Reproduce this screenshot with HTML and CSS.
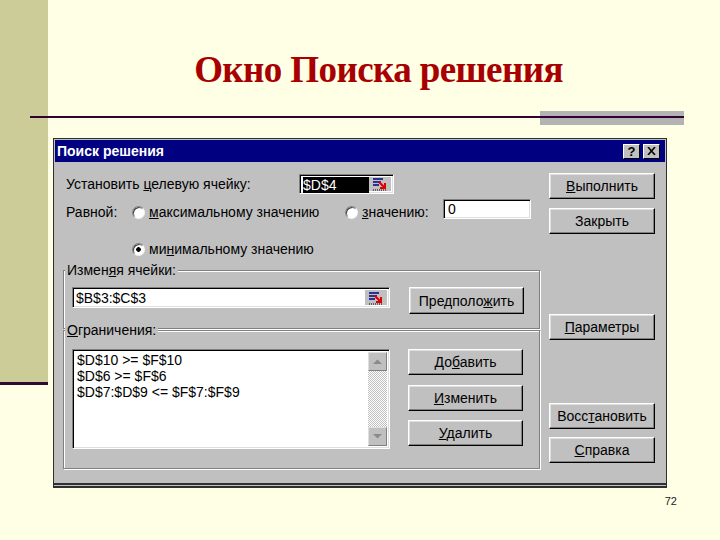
FILE: index.html
```html
<!DOCTYPE html>
<html lang="ru">
<head>
  <meta charset="UTF-8">
  <title>Окно Поиска решения</title>
  <link rel="stylesheet" href="styles.css">
</head>
<body>
  <div class="slide">
    <div class="sidebar"></div>
    <div class="main">
      <h1 class="title">Окно Поиска решения</h1>
      <div class="rule"><div class="rule-line"></div><div class="rule-block"></div></div>

      <div class="dialog">
        <div class="caption">
          <span class="caption-text">Поиск решения</span>
          <span class="caption-btn">?</span>
          <span class="caption-btn close">
            <svg width="9" height="8" viewBox="0 0 9 8"><path d="M1 0l7 8M8 0l-7 8" stroke="#000" stroke-width="1.6"/></svg>
          </span>
        </div>

        <div class="dialog-body">
          <div class="left">
            <div class="row row-target">
              <span class="label-target">Установить <u>ц</u>елевую ячейку:</span>
              <div class="field refedit narrow">
                <span class="ref-text"><span class="sel">$D$4</span></span>
                <span class="ref-btn">
                  <svg width="16" height="14" viewBox="0 0 16 14">
                    <path d="M1 2h10M1 5h8M1 8h6" stroke="#000080" stroke-width="1.5"/>
                    <path d="M7 5l5 5M13 6v5h-5" stroke="#e00000" stroke-width="2" fill="none"/>
                    <path d="M1 13h14" stroke="#000" stroke-dasharray="1 1"/>
                  </svg>
                </span>
              </div>
            </div>

            <div class="row row-equal">
              <span class="label-equal">Равной:</span>
              <label class="opt opt-max"><span class="radio"></span><span><u>м</u>аксимальному значению</span></label>
              <label class="opt opt-val"><span class="radio"></span><span><u>з</u>начению:</span></label>
              <div class="field value-field">0</div>
            </div>

            <div class="row row-min">
              <span class="label-equal"></span>
              <label class="opt"><span class="radio checked"></span><span>ми<u>н</u>имальному значению</span></label>
            </div>

            <fieldset class="group group-cells">
              <legend>Измен<u>я</u>я ячейки:</legend>
              <div class="group-row">
                <div class="field refedit wide">
                  <span class="ref-text">$B$3:$C$3</span>
                  <span class="ref-btn">
                    <svg width="16" height="14" viewBox="0 0 16 14">
                      <path d="M1 2h10M1 5h8M1 8h6" stroke="#000080" stroke-width="1.5"/>
                      <path d="M7 5l5 5M13 6v5h-5" stroke="#e00000" stroke-width="2" fill="none"/>
                      <path d="M1 13h14" stroke="#000" stroke-dasharray="1 1"/>
                    </svg>
                  </span>
                </div>
                <button class="btn btn-guess">Предполо<u>ж</u>ить</button>
              </div>
            </fieldset>

            <fieldset class="group group-limits">
              <legend><u>О</u>граничения:</legend>
              <div class="group-row">
                <div class="field listbox">
                  <div class="list-lines">
                    <div>$D$10 &gt;= $F$10</div>
                    <div>$D$6 &gt;= $F$6</div>
                    <div>$D$7:$D$9 &lt;= $F$7:$F$9</div>
                  </div>
                  <div class="scrollbar">
                    <span class="scroll-btn">
                      <svg width="9" height="5" viewBox="0 0 9 5"><path d="M0 5l4.5-4.5 4.5 4.5z" fill="#8a8a8a"/></svg>
                    </span>
                    <span class="scroll-track"></span>
                    <span class="scroll-btn">
                      <svg width="9" height="5" viewBox="0 0 9 5"><path d="M0 0l4.5 4.5 4.5-4.5z" fill="#8a8a8a"/></svg>
                    </span>
                  </div>
                </div>
                <div class="limit-actions">
                  <button class="btn">До<u>б</u>авить</button>
                  <button class="btn btn-edit"><u>И</u>зменить</button>
                  <button class="btn btn-delete"><u>У</u>далить</button>
                </div>
              </div>
            </fieldset>
          </div>

          <div class="right">
            <button class="btn btn-run"><u>В</u>ыполнить</button>
            <button class="btn btn-close">Закрыть</button>
            <button class="btn btn-params"><u>П</u>араметры</button>
            <button class="btn btn-restore">Восс<u>т</u>ановить</button>
            <button class="btn btn-help"><u>С</u>правка</button>
          </div>
        </div>
      </div>

      <div class="page-num">72</div>
    </div>
  </div>
</body>
</html>
```

FILE: styles.css
```css
body {
  margin: 0;
  background: #ffffe6;
  font-family: 'Liberation Sans', Arial, sans-serif;
}

.slide {
  display: flex;
  width: 720px;
  height: 540px;
  overflow: hidden;
}

.sidebar {
  flex: none;
  width: 48px;
  height: 382px;
  background: #cccc99;
  border-bottom: 3px solid #2f0b30;
}

.main {
  flex: 1;
  display: flex;
  flex-direction: column;
}

.title {
  margin: 48px 11px 0 0;
  font: bold 37px/44px 'Liberation Serif', 'Times New Roman', serif;
  letter-spacing: -0.6px;
  color: #a80000;
  text-align: center;
}

/* line under the title with the grey block on the right */
.rule {
  display: flex;
  width: 654px;
  height: 14px;
  margin: 19px 0 0 -18px;
}

.rule-line {
  flex: 1;
  height: 2px;
  margin-top: 5px;
  background: #330033;
}

.rule-block {
  width: 144px;
  background: linear-gradient(#b3b3b3 0 5px, #330033 5px 7px, #b3b3b3 7px);
}

/* the dialog window */
.dialog {
  box-sizing: border-box;
  width: 614px;
  height: 350px;
  margin: 13px 0 0 5px;
  padding: 1px 1px 0;
  background: #c0c0c0;
  border: 1px solid #303030;
  border-bottom: 5px double #303030;
  font-size: 14px;
  color: #000;
}

.caption {
  display: flex;
  align-items: center;
  height: 22px;
  padding: 0 5px 0 2px;
  background: #000080;
  color: #fff;
  font-weight: bold;
}

.caption-text {
  flex: 1;
}

.caption-btn {
  display: flex;
  align-items: center;
  justify-content: center;
  box-sizing: border-box;
  width: 17px;
  height: 15px;
  margin-left: 3px;
  background: #c0c0c0;
  color: #000;
  font-size: 13px;
  border: 1px solid;
  border-color: #fff #000 #000 #fff;
}

.dialog-body {
  display: flex;
  height: 321px;
  padding-left: 8px;
}

.left {
  width: 477px;
}

.row {
  display: flex;
  align-items: center;
  height: 20px;
  padding-left: 3px;
}

.row-target {
  margin-top: 12px;
}

.row-equal {
  margin-top: 8px;
}

.row-min {
  margin-top: 17px;
}

.label-target {
  width: 233px;
}

.label-equal {
  width: 66px;
}

.opt {
  display: flex;
  align-items: center;
  gap: 4px;
}

.opt-max {
  width: 213px;
}

.opt-val {
  width: 98px;
}

.radio {
  box-sizing: border-box;
  width: 13px;
  height: 13px;
  border-radius: 50%;
  background: #fff;
  border: 1px solid;
  border-color: #808080 #f4f4f4 #f4f4f4 #808080;
  box-shadow: inset 1px 1px #404040;
}

.radio.checked {
  background: radial-gradient(circle, #000 0 2px, #fff 2.6px);
}

/* sunken input fields */
.field {
  box-sizing: border-box;
  background: #fff;
  border: 1px solid;
  border-color: #808080 #fff #fff #808080;
  box-shadow: inset 1px 1px #000, inset -1px -1px #dfdfdf;
}

.value-field {
  width: 88px;
  height: 20px;
  margin-top: -6px;
  padding: 1px 4px;
  line-height: 16px;
}

.refedit {
  display: flex;
  padding: 2px;
}

.refedit.narrow {
  width: 95px;
  height: 20px;
}

.refedit.wide {
  width: 318px;
  height: 21px;
}

.ref-text {
  flex: 1;
  padding-left: 1px;
  line-height: 16px;
}

.sel {
  display: block;
  height: 16px;
  background: #000;
  color: #fff;
}

.ref-btn {
  display: flex;
  align-items: center;
  justify-content: center;
  width: 22px;
  background: #c0c0c0;
}

/* group boxes */
.group {
  box-sizing: border-box;
  width: 477px;
  margin: 0;
  padding: 9px 0 14px;
  border: 1px solid #808080;
  box-shadow: 1px 1px #fff, inset 1px 1px #fff;
}

.group legend {
  margin-left: 1px;
  padding: 0 2px;
  line-height: 16px;
  background: #c0c0c0;
}

.group-cells {
  margin-top: 3px;
}

.group-limits {
  margin-top: -7px;
  padding: 11px 0 19px;
}

.group-row {
  display: flex;
  align-items: flex-start;
  padding-left: 8px;
}

.listbox {
  display: flex;
  width: 318px;
  height: 100px;
  padding: 2px;
}

.list-lines {
  flex: 1;
  padding: 0 2px;
  line-height: 16px;
}

.scrollbar {
  display: flex;
  flex-direction: column;
  width: 19px;
}

.scroll-btn {
  display: flex;
  align-items: center;
  justify-content: center;
  box-sizing: border-box;
  height: 19px;
  background: #c0c0c0;
  border: 1px solid;
  border-color: #dfdfdf #808080 #808080 #dfdfdf;
}

.scroll-track {
  flex: 1;
  background: repeating-conic-gradient(#c0c0c0 0 25%, #fff 0 50%) 0 0 / 2px 2px;
}

.limit-actions {
  display: flex;
  flex-direction: column;
  margin-left: 18px;
}

/* push buttons */
.btn {
  box-sizing: border-box;
  height: 26px;
  padding: 0;
  background: #c0c0c0;
  border: 1px solid;
  border-color: #fff #000 #000 #fff;
  box-shadow: inset -1px -1px #808080, inset 1px 1px #dfdfdf;
  font: 14px 'Liberation Sans', Arial, sans-serif;
  color: #000;
}

.limit-actions .btn,
.btn-guess {
  width: 115px;
}

.btn-guess {
  height: 27px;
  margin-left: 19px;
}

.btn-edit {
  margin-top: 10px;
}

.btn-delete {
  margin-top: 9px;
}

.right {
  display: flex;
  flex-direction: column;
  width: 106px;
  margin-left: 9px;
}

.btn-run {
  margin-top: 11px;
}

.btn-close {
  margin-top: 9px;
}

.btn-params {
  margin-top: 80px;
}

.btn-restore {
  margin-top: 63px;
}

.btn-help {
  margin-top: 8px;
}

.page-num {
  margin: 7px 43px 0 0;
  text-align: right;
  font-size: 11px;
  color: #222;
}
```
